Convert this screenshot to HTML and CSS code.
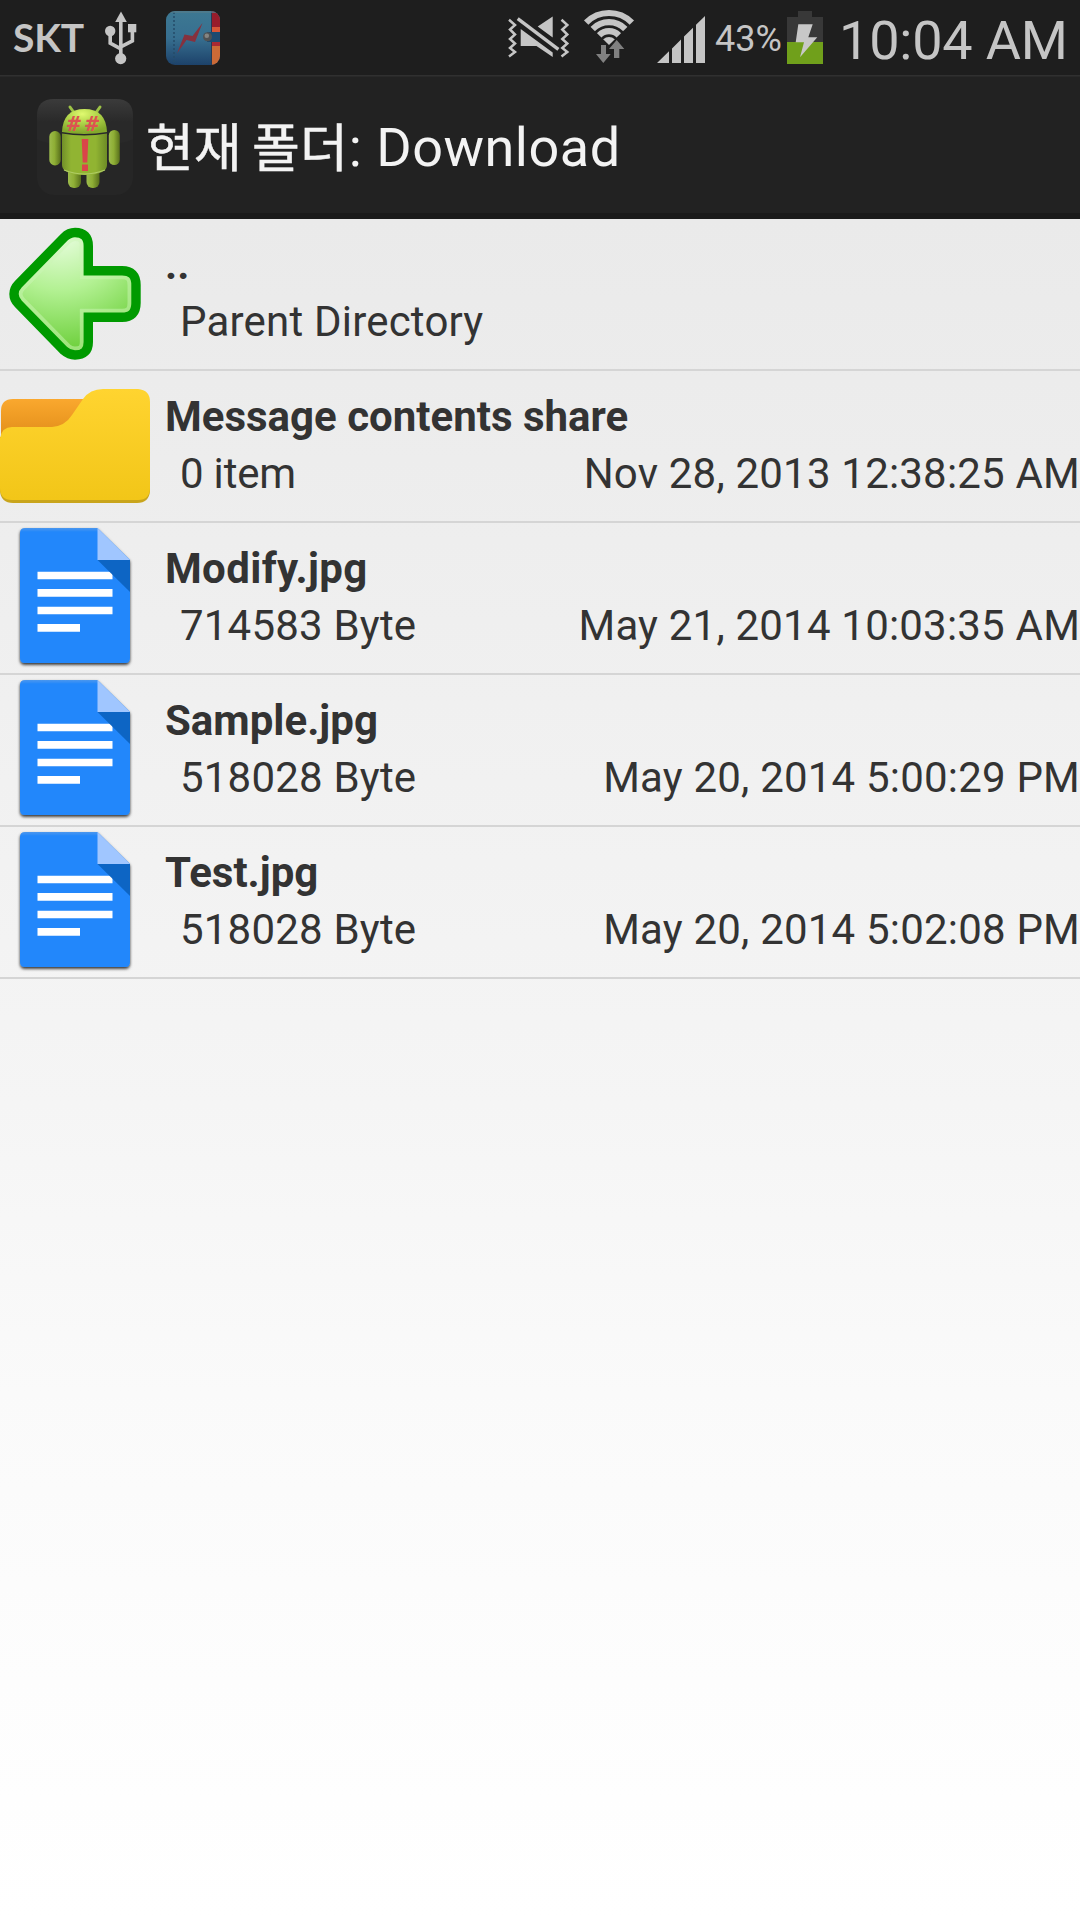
FILE: index.html
```html
<!DOCTYPE html>
<html lang="ko">
<head>
<meta charset="utf-8">
<title>현재 폴더: Download</title>
<link rel="stylesheet" href="styles.css">
</head>
<body>
<svg class="defs" width="0" height="0" aria-hidden="true">
  <defs>
    <linearGradient id="paper" x1="0" y1="0" x2="0" y2="1"><stop offset="0" stop-color="#4a97ee"/><stop offset=".03" stop-color="#2387fb"/><stop offset="1" stop-color="#2387fb"/></linearGradient>
    <filter id="shade" x="-10%" y="-10%" width="120%" height="120%"><feDropShadow dx="0" dy="1.8" stdDeviation="1.5" flood-color="#000" flood-opacity=".8"/></filter>
  </defs>
  <symbol id="doc" viewBox="0 0 150 150">
    <path d="M25 5H97.5L130 37V135Q130 140 125 140H25Q20 140 20 135V10Q20 5 25 5Z" fill="url(#paper)" filter="url(#shade)"/>
    <path d="M37.5 48.7H112.5V56.3H37.5ZM37.5 66H112.5V73.7H37.5ZM37.5 83.7H112.5V91.3H37.5ZM37.5 101H80V108.7H37.5Z" fill="#fff"/>
    <path d="M97.5 37H130V69Z" fill="#0d65c4"/>
    <path d="M97.5 5L130 37H97.5Z" fill="#a0c6ff"/>
  </symbol>
</svg>

<header class="status">
  <span class="carrier">SKT</span>
  <svg class="usb" width="36" height="75" viewBox="103 0 36 75">
    <g fill="#c5c5c5"><path d="M121 11.5L126.8 22H115.2Z"/><circle cx="110.2" cy="31" r="5.2"/><path d="M128 24H136.3V32.3H128Z"/><circle cx="120.7" cy="58.6" r="5.6"/></g>
    <path d="M120.8 20V56M110.2 34V43.2L120.8 48.8M132.4 30V40.8L120.8 46.8" fill="none" stroke="#c5c5c5" stroke-width="3.6"/>
  </svg>
  <svg class="wallet" width="54" height="75" viewBox="166 0 54 75">
    <defs><linearGradient id="cover" x1="0" y1="0" x2="0" y2="1"><stop offset="0" stop-color="#3d7892"/><stop offset=".5" stop-color="#376f90"/><stop offset="1" stop-color="#1d426a"/></linearGradient>
    <clipPath id="wclip"><rect x="166" y="11" width="54" height="54" rx="9"/></clipPath></defs>
    <g clip-path="url(#wclip)">
      <path d="M166 11H220V65H166Z" fill="url(#cover)"/>
      <path d="M212 11H220V27H212Z" fill="#981c2b"/><path d="M212 27H220V32H212Z" fill="#d85637"/>
      <path d="M212 42H220V46H212Z" fill="#a92933"/><path d="M212 46H220V65H212Z" fill="#cb6a37"/>
      <path d="M211.5 11V65" stroke="#263b55" stroke-width="1"/>
      <path d="M174 12V64" stroke="#254b69" stroke-width="1.5" stroke-dasharray="2 2"/>
      <path d="M207 32H220V42H207Z" fill="#1d4a70"/><path d="M167 12H219" stroke="#527b8b" stroke-width="1.4"/>
    </g>
    <path d="M202.5 23L195 42L186.5 40L177 53.5L184.5 34.5L192.5 36Z" fill="#86313e"/>
    <circle cx="207.5" cy="36.8" r="4.5" fill="#4f5254"/><circle cx="206.8" cy="35.8" r="2.3" fill="#858583"/>
  </svg>
  <svg class="mute" width="62" height="75" viewBox="508 0 62 75">
    <g fill="#c5c5c5"><path d="M520.7 29L552.7 52.5V57L536.5 46H520.7ZM537.7 26.5L552.7 16.5V37.5Z"/></g>
    <g fill="none" stroke="#c5c5c5"><path d="M517.7 18.6L558.4 49.4" stroke-width="3.4"/>
    <path stroke-width="2.5" d="M509 19.8L515 25L510 29.5L515 34.5L510 39L515 43.5L510 48L515 52L509 56.5M561.5 19.8L567.3 25L562.3 29.5L567.3 34.5L562.3 39L567.3 43.5L562.3 48L567.3 52L561.5 56.5"/></g>
  </svg>
  <svg class="wifi" width="54" height="75" viewBox="582 0 54 75">
    <defs><clipPath id="wedge"><path d="M609 45L581 17.5V0H637V17.5Z"/></clipPath></defs>
    <g clip-path="url(#wedge)" fill="none" stroke="#c5c5c5" stroke-width="6.2"><circle cx="609" cy="45" r="32"/><circle cx="609" cy="45" r="22.8"/><circle cx="609" cy="45" r="13.8"/><circle cx="609" cy="45" r="8" fill="#c5c5c5" stroke="none"/></g>
    <path d="M601 45H606V54H610.7L603.3 63L596 54H601ZM614 58V49H609L616.7 40L624.3 49H619.3V58Z" fill="#808080" stroke="#1e1e1e" stroke-width="1.6" paint-order="stroke"/>
  </svg>
  <svg class="signal" width="48" height="75" viewBox="657 0 48 75"><path fill="#c5c5c5" d="M657 63L669 51.3V63ZM672 48.4L681 39.6V63H672ZM684 36.6L693 27.8V63H684ZM696 24.8L705 16V63H696Z"/></svg>
  <span class="percent">43%</span>
  <svg class="battery" width="36" height="75" viewBox="787 0 36 75">
    <path d="M798 11H812V17H823V42H787V17H798Z" fill="#383838"/><path d="M787 42H823V64H787Z" fill="#70a01b"/>
    <path d="M798.3 24.3H812.7L808.3 37.3H817.3L800 57.3L804 42.3H795.7Z" fill="#c8c8c8"/>
  </svg>
  <span class="clock">10:04 AM</span>
</header>

<div class="titlebar">
  <svg width="96" height="96" viewBox="37 99 96 96">
    <defs>
      <linearGradient id="tile" x1="0" y1="0" x2="0" y2="1"><stop offset="0" stop-color="#3b3b3b"/><stop offset=".5" stop-color="#292929"/></linearGradient>
      <radialGradient id="skull" cx=".45" cy=".2" r=".75"><stop offset="0" stop-color="#e0fa70"/><stop offset=".45" stop-color="#b2d64b"/><stop offset="1" stop-color="#84a92c"/></radialGradient>
      <linearGradient id="torso"><stop offset="0" stop-color="#718f29"/><stop offset=".2" stop-color="#91b432"/><stop offset=".75" stop-color="#91b432"/><stop offset="1" stop-color="#6d8c26"/></linearGradient>
      <linearGradient id="limb"><stop offset="0" stop-color="#9dbc4c"/><stop offset=".45" stop-color="#8eae35"/><stop offset="1" stop-color="#586f1b"/></linearGradient>
    </defs>
    <rect x="37" y="99" width="96" height="96" rx="17" fill="#262626"/>
    <path d="M37 139V116Q37 99 54 99H116Q133 99 133 116V139Q122 145 85 145T37 139Z" fill="url(#tile)"/>
    <path d="M70 107L75 114M100 107L95 114" stroke="#9dc346" stroke-width="3" stroke-linecap="round"/>
    <path d="M62 132Q63 109 84.5 109T107 132Q84 136 62 132Z" fill="url(#skull)"/>
    <rect x="49.3" y="131" width="11.5" height="34.5" rx="5.7" fill="url(#limb)"/><rect x="108.8" y="130" width="11" height="35" rx="5.5" fill="url(#limb)"/>
    <rect x="68" y="165" width="13" height="23" rx="6" fill="url(#limb)"/><rect x="86.5" y="165" width="13" height="23" rx="6" fill="url(#limb)"/>
    <path d="M62 133.5Q84 137.5 107 133.5V165Q107 174.5 85 175Q62 174.5 62 165Z" fill="url(#torso)"/>
    <path d="M64 170Q84 178 105 170" fill="none" stroke="#b0cc65" stroke-width="1.2"/>
    <path d="M81.7 139H88.3L87.3 162.5H82.7ZM82 164.5H88V171H82Z" fill="#d94549"/>
    <text class="hash" x="66.5" y="130.5">#</text><text class="hash" x="84.7" y="130.5">#</text>
  </svg>
  <h1><span class="ko">현재 폴더</span><span class="path">: Download</span></h1>
</div>

<main class="list">
  <div class="row">
    <svg width="150" height="150" viewBox="0 219 150 150">
      <defs><radialGradient id="leaf" gradientUnits="userSpaceOnUse" cx="60" cy="225" r="130"><stop offset="0" stop-color="#f2ffed"/><stop offset=".5" stop-color="#b3f193"/><stop offset="1" stop-color="#68cd35"/></radialGradient>
      <path id="arrow" d="M88.3 270.7V246Q88.3 232.5 75 232.5Q69 232.5 64 237.5L18.5 284Q14 288.5 14 294T18.5 304L64 350.5Q69 355 75 355Q88.3 355 88.3 342V317.3H122Q136 317.3 136 303V285Q136 270.7 122 270.7Z"/>
      <clipPath id="inside"><use href="#arrow"/></clipPath></defs>
      <use href="#arrow" fill="url(#leaf)" stroke="#cbf5b5" stroke-opacity=".5" stroke-width="17" clip-path="url(#inside)"/>
      <use href="#arrow" fill="none" stroke="#009a00" stroke-width="9.4"/>
    </svg>
    <div class="info"><div class="name">..</div><div class="meta"><span>Parent Directory</span></div></div>
  </div>
  <div class="row">
    <svg width="150" height="150" viewBox="0 371 150 150">
      <defs><linearGradient id="back" x1="0" y1="0" x2="0" y2="1"><stop offset="0" stop-color="#faa82e"/><stop offset="1" stop-color="#e08c18"/></linearGradient>
      <linearGradient id="front" x1="0" y1="0" x2="0" y2="1"><stop offset="0" stop-color="#ffd430"/><stop offset="1" stop-color="#f2c618"/></linearGradient></defs>
      <path d="M1 440V411Q1 399 13 399H90V431Z" fill="url(#back)"/>
      <path d="M0 437V491Q1 503 13 503H137Q149 503 150 491V437Z" fill="#c9a51c"/>
      <path d="M0 438Q2 427 12 427H52Q65 426 72 415L83 399Q90 389 103 389H138Q150 390 150 402V488Q150 500 138 500H12Q0 500 0 488Z" fill="url(#front)"/>
    </svg>
    <div class="info"><div class="name">Message contents share</div><div class="meta"><span class="count">0 item</span><span class="date">Nov 28, 2013 12:38:25 AM</span></div></div>
  </div>
  <div class="row">
    <svg width="150" height="150"><use href="#doc"/></svg>
    <div class="info"><div class="name wide">Modify.jpg</div><div class="meta"><span>714583 Byte</span><span class="date">May 21, 2014 10:03:35 AM</span></div></div>
  </div>
  <div class="row">
    <svg width="150" height="150"><use href="#doc"/></svg>
    <div class="info"><div class="name">Sample.jpg</div><div class="meta"><span>518028 Byte</span><span class="date">May 20, 2014 5:00:29 PM</span></div></div>
  </div>
  <div class="row">
    <svg width="150" height="150"><use href="#doc"/></svg>
    <div class="info"><div class="name">Test.jpg</div><div class="meta"><span>518028 Byte</span><span class="date">May 20, 2014 5:02:08 PM</span></div></div>
  </div>
</main>
</body>
</html>
```
FILE: styles.css
```css
* { box-sizing: border-box; }
body {
  margin: 0;
  width: 1080px;
  height: 1920px;
  display: flex;
  flex-direction: column;
  overflow: hidden;
  background: #fff;
  font-family: Roboto, "Noto Sans CJK KR", sans-serif;
}
svg { display: block; flex: none; }
.defs { position: absolute; }

.status {
  display: flex;
  height: 75px;
  flex: none;
  background: #1e1e1e;
  color: #c5c5c5;
  white-space: nowrap;
}
.carrier {
  width: 90px;
  padding-left: 13px;
  font: 700 39px/74px Lato, sans-serif;
  letter-spacing: -.2px;
}
.usb { margin-left: 13px; }
.wallet { margin-left: 27px; }
.mute { margin-left: 288px; }
.wifi { margin-left: 12px; }
.signal { margin-left: 21px; }
.percent {
  width: 72px;
  margin-left: 10px;
  font-size: 36px;
  line-height: 78px;
}
.clock {
  margin-left: 16px;
  font-size: 54px;
  line-height: 81px;
  letter-spacing: -.2px;
}

.titlebar {
  display: flex;
  align-items: center;
  height: 144px;
  flex: none;
  padding-left: 37px;
  background: linear-gradient(#303030 0 1px, #292929 1px 2px, #222 2px 138px, #1b1b1b 138px);
  color: #f3f3f3;
}
.titlebar h1 {
  margin: 1px 0 0 13px;
  font-size: 54px;
  font-weight: 400;
  line-height: 72px;
  white-space: pre;
}
.ko {
  margin-right: 1px;
  font-size: 52px;
  line-height: 40px;
  vertical-align: -1px;
  word-spacing: -2.5px;
  -webkit-text-stroke: .5px #f3f3f3;
}
.path { letter-spacing: .5px; }
.hash {
  font: italic 700 22px "Noto Sans", sans-serif;
  fill: #dd5351;
}

.list {
  flex: 1;
  background: linear-gradient(#eaeaea, #f5f5f5 52%, #fafafa 69%, #fdfdfd 86%, #fff);
  color: #333;
  font-size: 42px;
  line-height: 57px;
}
.row {
  display: flex;
  height: 152px;
  border-bottom: 2px solid #d5d5d5;
}
.info {
  flex: 1;
  padding: 17px 0 0 15px;
  white-space: nowrap;
}
.name { font-weight: 700; }
.name.wide { letter-spacing: .35px; }
.meta {
  display: flex;
  justify-content: space-between;
  padding-left: 15px;
  letter-spacing: .2px;
}
.count { letter-spacing: -.2px; }
.date { letter-spacing: .2px; }
```
